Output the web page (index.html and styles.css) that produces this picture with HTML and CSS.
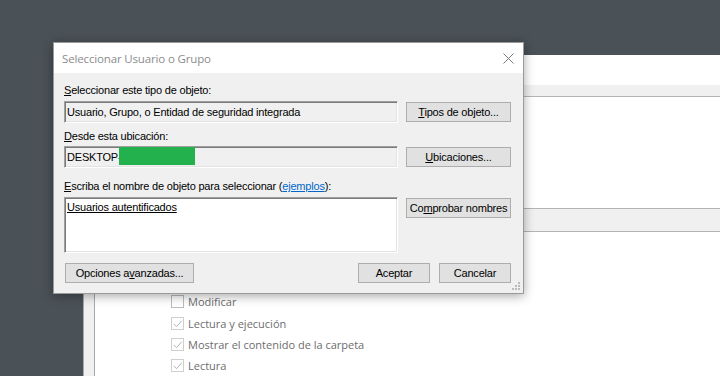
FILE: index.html
```html
<!DOCTYPE html>
<html lang="es">
<head>
  <meta charset="UTF-8" />
  <title>Seleccionar Usuario o Grupo</title>
  <link rel="stylesheet" href="styles.css">
</head>
<body>

  <div class="desktop">

    <!-- Ventana de permisos (detrás) -->
    <div class="bg-window">
      <div class="bg-side"></div>
      <div class="bg-content">
        <div class="bg-top"></div>
        <div class="bg-band"></div>
        <div class="bg-area"></div>
        <div class="bg-band tall"></div>
        <ul class="perms">
          <li><span class="check"></span>Modificar</li>
          <li><span class="check on"><svg viewBox="0 0 12 12"><polyline points="2,6.5 5,9.5 10.5,3" /></svg></span>Lectura y ejecución</li>
          <li><span class="check on"><svg viewBox="0 0 12 12"><polyline points="2,6.5 5,9.5 10.5,3" /></svg></span>Mostrar el contenido de la carpeta</li>
          <li><span class="check on"><svg viewBox="0 0 12 12"><polyline points="2,6.5 5,9.5 10.5,3" /></svg></span>Lectura</li>
        </ul>
      </div>
    </div>

    <!-- Dialogo -->
    <div class="dialog">
      <div class="titlebar">
        <span class="title">Seleccionar Usuario o Grupo</span>
        <svg class="close" viewBox="0 0 11 11"><path d="M0.5 0.5 L10.5 10.5 M10.5 0.5 L0.5 10.5" /></svg>
      </div>

      <div class="dialog-body">
        <div class="label first"><u>S</u>eleccionar este tipo de objeto:</div>
        <div class="row">
          <div class="field">Usuario, Grupo, o Entidad de seguridad integrada</div>
          <button class="btn"><u>T</u>ipos de objeto...</button>
        </div>

        <div class="label second"><u>D</u>esde esta ubicación:</div>
        <div class="row">
          <div class="field">DESKTOP-<span class="redact"></span></div>
          <button class="btn"><u>U</u>bicaciones...</button>
        </div>

        <div class="label third"><u>E</u>scriba el nombre de objeto para seleccionar (<a href="#">ejemplos</a>):</div>
        <div class="row top">
          <div class="field multi"><u>Usuarios autentificados</u></div>
          <button class="btn">Co<u>m</u>probar nombres</button>
        </div>

        <div class="actions">
          <button class="btn wide">Opciones a<u>v</u>anzadas...</button>
          <div class="right">
            <button class="btn small">Aceptar</button>
            <button class="btn small">Cancelar</button>
          </div>
        </div>
      </div>

      <svg class="grip" viewBox="0 0 9 9">
        <rect x="6" y="0" width="2" height="2" />
        <rect x="3" y="3" width="2" height="2" />
        <rect x="6" y="3" width="2" height="2" />
        <rect x="0" y="6" width="2" height="2" />
        <rect x="3" y="6" width="2" height="2" />
        <rect x="6" y="6" width="2" height="2" />
      </svg>
    </div>

  </div>

</body>
</html>
```

FILE: styles.css
```css
:root {
  --desk: #4a5157;
  --face: #f0f0f0;
  --btn: #e1e1e1;
  --btn-border: #adadad;
}

body {
  margin: 0;
  padding: 0;
  width: 720px;
  height: 376px;
  overflow: hidden;
  background: var(--desk);
  font-family: 'Liberation Sans', Arial, sans-serif;
  font-size: 11px;
  color: #000;
}

.desktop {
  position: relative;
  width: 720px;
  height: 376px;
  overflow: hidden;
}

/* ---- ventana de fondo ---- */
.bg-window {
  position: absolute;
  left: 83px;
  top: 55px;
  right: 0;
  bottom: 0;
  display: flex;
  background: #fff;
  border-left: 1px solid #a9a9a9;
}

.bg-side {
  width: 10px;
  background: var(--face);
  border-right: 1px solid #a9a9a9;
}

.bg-content {
  flex: 1;
  display: flex;
  flex-direction: column;
}

.bg-top {
  height: 30px;
}

.bg-band {
  height: 11px;
  background: var(--face);
  border-bottom: 1px solid #b4b4b4;
}

.bg-area {
  height: 112px;
}

.bg-band.tall {
  height: 22px;
  border-top: 1px solid #b4b4b4;
}

.perms {
  list-style: none;
  margin: 0;
  padding: 59px 0 0 76px;
  font-family: 'Open Sans', sans-serif;
  font-size: 11px;
  color: #6d6d6d;
}

.perms li {
  height: 21.2px;
  display: flex;
  align-items: center;
  gap: 4px;
}

.check {
  width: 11px;
  height: 11px;
  border: 1px solid #bcbcbc;
  background: #fff;
  display: flex;
}

.check.on {
  border-color: #cfcfcf;
}

.check svg {
  width: 11px;
  height: 11px;
  fill: none;
  stroke: #adadad;
  stroke-width: 1;
}

/* ---- dialogo ---- */
.dialog {
  position: absolute;
  left: 53px;
  top: 42px;
  width: 471px;
  height: 252px;
  box-sizing: border-box;
  border: 1px solid #9a9a9a;
  background: var(--face);
  box-shadow: 0 2px 10px rgba(0, 0, 0, 0.35);
}

.titlebar {
  height: 30px;
  background: #fff;
  display: flex;
  align-items: center;
  justify-content: space-between;
  padding: 0 9px 0 8px;
}

.title {
  font-family: 'Open Sans', sans-serif;
  font-size: 11.5px;
  letter-spacing: -0.15px;
  color: #8c8c8c;
}

.close {
  width: 11px;
  height: 11px;
  stroke: #7a7a7a;
  stroke-width: 1;
  fill: none;
}

.dialog-body {
  padding: 0 12px 0 10px;
  display: flex;
  flex-direction: column;
  letter-spacing: -0.2px;
}

.label {
  height: 13px;
  line-height: 13px;
}

.label.first { margin: 11px 0 4px; }
.label.second { margin: 7px 0 3px; }
.label.third { margin: 12px 0 4px; }

.label a {
  color: #0066cc;
}

.row {
  display: grid;
  grid-template-columns: 334px 105px;
  column-gap: 8px;
  align-items: center;
}

.row.top {
  align-items: start;
}

.field {
  position: relative;
  height: 22px;
  box-sizing: border-box;
  line-height: 20px;
  padding: 0 2px;
  border: 1px solid;
  border-color: #a0a0a0 #ffffff #ffffff #a0a0a0;
  box-shadow: inset 1px 1px 0 #7a7a7a, inset -1px -1px 0 #e3e3e3;
  white-space: nowrap;
  overflow: hidden;
}

.field.multi {
  height: 56px;
  background: #fff;
  line-height: 13px;
  padding-top: 3px;
  overflow: visible;
}

.redact {
  position: absolute;
  left: 54px;
  top: -2px;
  width: 76px;
  height: 20px;
  background: #22b14c;
}

.btn {
  height: 20px;
  padding: 0;
  margin: 0;
  background: var(--btn);
  border: 1px solid var(--btn-border);
  font-family: 'Liberation Sans', Arial, sans-serif;
  font-size: 11px;
  letter-spacing: -0.2px;
  color: #000;
}

.row.top .btn {
  margin-top: 1px;
}

.actions {
  margin-top: 10px;
  display: flex;
  justify-content: space-between;
}

.btn.wide {
  width: 129px;
  margin-left: 1px;
}

.right {
  display: flex;
  gap: 9px;
}

.btn.small {
  width: 72px;
}

.grip {
  position: absolute;
  right: 2px;
  bottom: 2px;
  width: 9px;
  height: 9px;
  fill: #bcbcbc;
}
```
